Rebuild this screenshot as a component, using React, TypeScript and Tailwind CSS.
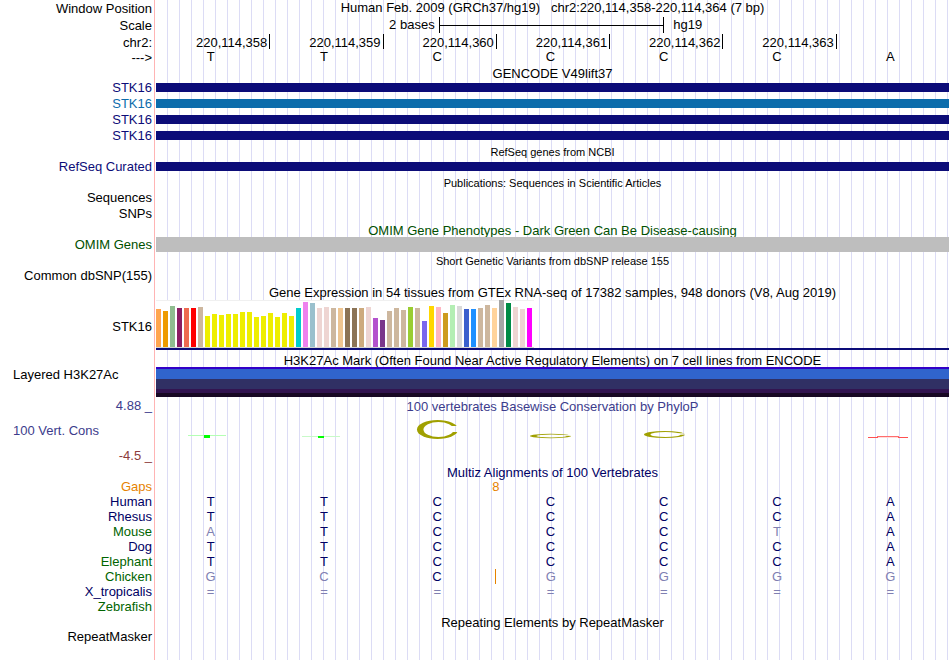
import type { ReactNode } from "react";
import clsx from "clsx";

const positions = ["220,114,358", "220,114,359", "220,114,360", "220,114,361", "220,114,362", "220,114,363", ""];
const bases = ["T", "T", "C", "C", "C", "C", "A"];

const transcripts = [
  { label: "text-[#0c0c78]", bar: "bg-[#0c0c78]" },
  { label: "text-[#0c6cac]", bar: "bg-[#0c6cac]" },
  { label: "text-[#0c0c78]", bar: "bg-[#0c0c78]" },
  { label: "text-[#0c0c78]", bar: "bg-[#0c0c78]" },
];

// [bar height in px, tissue colour]
const tissues: [number, string][] = [
  [38, "#ffa54f"], [36, "#ee9a00"], [41, "#8fbc8f"], [39, "#8b1c62"], [39, "#ee6a50"], [39, "#ff0000"],
  [40, "#cdb79e"], [31, "#eeee00"], [33, "#eeee00"], [32, "#eeee00"], [33, "#eeee00"], [33, "#eeee00"],
  [35, "#eeee00"], [35, "#eeee00"], [30, "#eeee00"], [31, "#eeee00"], [34, "#eeee00"], [30, "#eeee00"],
  [34, "#eeee00"], [31, "#eeee00"], [39, "#00cdcd"], [45, "#ee82ee"], [44, "#9ac0cd"], [39, "#eed5d2"],
  [40, "#eed5d2"], [39, "#cdb79e"], [39, "#eec591"], [39, "#8b7355"], [39, "#8b7355"], [39, "#cdaa7d"],
  [40, "#eed5d2"], [29, "#b452cd"], [27, "#7a378b"], [36, "#cdb79e"], [39, "#cdb79e"], [37, "#cdb79e"],
  [40, "#9acd32"], [39, "#cdb79e"], [26, "#7a67ee"], [41, "#ffd700"], [40, "#ffb6c1"], [34, "#cd9b1d"],
  [42, "#b4eeb4"], [41, "#d9d9d9"], [38, "#3a5fcd"], [38, "#1e90ff"], [39, "#cdb79e"], [42, "#cdb79e"],
  [39, "#ffd39b"], [47, "#a6a6a6"], [44, "#008b45"], [40, "#eed5d2"], [38, "#eed5d2"], [39, "#ff00ff"],
];

const species = [
  { name: "Human", color: "text-[#000064]", seq: "TTCCCCA" },
  { name: "Rhesus", color: "text-[#000064]", seq: "TTCCCCA" },
  { name: "Mouse", color: "text-[#006400]", seq: "ATCCCTA" },
  { name: "Dog", color: "text-[#000064]", seq: "TTCCCCA" },
  { name: "Elephant", color: "text-[#006400]", seq: "TTCCCCA" },
  { name: "Chicken", color: "text-[#006400]", seq: "GCCGGGG", insertAt: 3 },
  { name: "X_tropicalis", color: "text-[#000064]", seq: "=======" },
  { name: "Zebrafish", color: "text-[#006400]", seq: "       " },
];

type RowProps = {
  label?: string;
  labelClass?: string;
  className?: string;
  children?: ReactNode;
};

function Row({ label, labelClass, className, children }: RowProps) {
  return (
    <div className={clsx("flex", className)}>
      <div className={clsx("w-[156px] shrink-0 pr-1 text-right leading-4 whitespace-nowrap", labelClass)}>{label}</div>
      <div className="min-w-0 flex-1">{children}</div>
    </div>
  );
}

type TitleProps = {
  text: string;
  color?: string;
  small?: boolean;
  label?: string;
  labelClass?: string;
  className?: string;
};

function Title({ text, color, small, label, labelClass, className = "h-[15px]" }: TitleProps) {
  return (
    <Row className={className} label={label} labelClass={labelClass}>
      <h2 className={clsx("flex h-full items-end justify-center leading-[13px] whitespace-nowrap", small && "text-[11px]", color)}>
        {text}
      </h2>
    </Row>
  );
}

function RingMark({ id, y, ry, rim, gap }: { id: string; y: number; ry: number; rim: number; gap: number }) {
  return (
    <>
      <mask id={id}>
        <ellipse cx="21.5" cy={y} rx="20.5" ry={ry} fill="white" />
        <ellipse cx="22.5" cy={y} rx="15" ry={ry - rim} fill="black" />
        <rect x="33" y={y - gap - 0.5} width="11" height={gap * 2} fill="black" />
      </mask>
      <rect width="44" height="35" fill="#a0a000" mask={`url(#${id})`} />
    </>
  );
}

const marks: ReactNode[] = [
  <>
    <rect x="-2" y="22" width="38" height="1" fill="#b4ffb4" />
    <rect x="14" y="22" width="6" height="3" fill="#00ff00" />
  </>,
  <>
    <rect x="-1" y="23" width="38" height="1" fill="#c8fac8" />
    <rect x="15" y="23" width="6" height="2" fill="#00ff00" />
  </>,
  <RingMark id="mark-2" y={16.5} ry={9.5} rim={2} gap={3} />,
  <RingMark id="mark-3" y={23} ry={2.2} rim={0.8} gap={0.4} />,
  <RingMark id="mark-4" y={21.5} ry={3.5} rim={1} gap={0.7} />,
  null,
  <>
    <rect x="-1" y="24" width="10" height="1" fill="#ff5050" />
    <rect x="8" y="23" width="22" height="1" fill="#ff6e6e" />
    <rect x="9" y="24" width="20" height="1" fill="#ffdcdc" />
    <rect x="29" y="24" width="10" height="1" fill="#ff5050" />
  </>,
];

export default function App() {
  return (
    <main className="flex min-h-screen flex-col bg-white bg-[linear-gradient(90deg,white_154px,#ffb4b4_154px,#ffb4b4_155px,white_155px,white_156px,transparent_156px),linear-gradient(90deg,#dcdcf5_1px,transparent_1px)] [background-position:0_0,11px_0] [background-size:100%_100%,12px_100%] pr-px font-['Liberation_Sans',Arial,sans-serif] text-[13px] text-black">
      <Row className="h-[17px]" label="Window Position" labelClass="pt-px">
        <h1 className="text-center leading-4 whitespace-pre">
          {"Human Feb. 2009 (GRCh37/hg19)   chr2:220,114,358-220,114,364 (7 bp)"}
        </h1>
      </Row>

      <Row className="h-[17px]" label="Scale" labelClass="pt-px">
        <div className="flex pl-[3px] leading-4">
          <span className="flex-1 pr-1 text-right">2 bases</span>
          <span className="flex h-4 w-2/7 items-center border-x border-black">
            <span className="h-px w-full bg-black" />
          </span>
          <span className="flex-1 pl-[9px]">hg19</span>
        </div>
      </Row>

      <Row className="h-4" label="chr2:" labelClass="pt-px">
        <div className="grid grid-cols-7 leading-[18px]">
          {positions.map((pos, i) => (
            <span key={i} className={clsx("h-[15px] pr-0.5 text-right", i > 0 && "border-l border-black")}>{pos}</span>
          ))}
        </div>
      </Row>

      <Row className="h-[13px]" label="--->">
        <div className="grid grid-cols-7 leading-[13px]">
          {bases.map((base, i) => (
            <span key={i} className="pr-1 text-center">{base}</span>
          ))}
        </div>
      </Row>

      <Title text="GENCODE V49lift37" className="h-[17px]" />
      {transcripts.map((t, i) => (
        <Row key={i} className="h-4" label="STK16" labelClass={t.label}>
          <div className={clsx("mt-[3px] h-[9px]", t.bar)} />
        </Row>
      ))}

      <Title text="RefSeq genes from NCBI" small />
      <Row className="h-4" label="RefSeq Curated" labelClass="text-[#0c0c78]">
        <div className="mt-[3px] h-[9px] bg-[#0c0c78]" />
      </Row>

      <Title text="Publications: Sequences in Scientific Articles" small />
      <Row className="h-4" label="Sequences" />
      <Row className="h-4" label="SNPs" />

      <Title text="OMIM Gene Phenotypes - Dark Green Can Be Disease-causing" color="text-[#005000]" />
      <Row className="h-4" label="OMIM Genes" labelClass="text-[#005000]">
        <div className="h-[15px] bg-[#bebebe]" />
      </Row>

      <Title text="Short Genetic Variants from dbSNP release 155" small />
      <Row className="h-4" label="Common dbSNP(155)" />

      <Title text="Gene Expression in 54 tissues from GTEx RNA-seq of 17382 samples, 948 donors (V8, Aug 2019)" />
      <Row className="h-[53px] pt-px" label="STK16" labelClass="self-center pt-0.5">
        <div className="flex h-12 w-[378px] items-end gap-0.5 border-t border-b border-t-[#f0f0f0] border-b-[#d2d2d2] bg-white">
          {tissues.map(([height, color], i) => (
            <div key={i} className="w-[5px] shrink-0" style={{ height, backgroundColor: color }} />
          ))}
        </div>
        <div className="h-0.5 bg-[#0c0c78]" />
      </Row>

      <Title text="H3K27Ac Mark (Often Found Near Active Regulatory Elements) on 7 cell lines from ENCODE" />
      <Row className="h-[30px]" label="Layered H3K27Ac" labelClass="pl-[13px] !text-left">
        <div className="h-0.5 bg-[#3200c8]" />
        <div className="h-2.5 bg-[#3064cc]" />
        <div className="h-2.5 bg-[#303064]" />
        <div className="h-1 bg-[#321450]" />
        <div className="h-1 bg-[#180824]" />
      </Row>

      <Title
        text="100 vertebrates Basewise Conservation by PhyloP"
        color="text-[#3c3c8c]"
        label="4.88 _"
        labelClass="pt-px text-[#3c3c8c]"
        className="h-4"
      />
      <Row className="h-[35px]" label="100 Vert. Cons" labelClass="self-center pl-[13px] !text-left text-[#3c3c8c]">
        <div className="grid grid-cols-7">
          {marks.map((mark, i) => (
            <span key={i} className="flex justify-center pr-1">
              <svg width="46" height="35" viewBox="-2 0 46 35">{mark}</svg>
            </span>
          ))}
        </div>
      </Row>
      <Row className="h-4" label="-4.5 _" labelClass="text-[#8c3c3c]" />

      <Title text="Multiz Alignments of 100 Vertebrates" color="text-[#000064]" />
      <table className="w-full table-fixed leading-[15px]">
        <thead>
          <tr className="text-[#e68200]">
            <th scope="row" className="w-[156px] pr-1 text-right font-normal">Gaps</th>
            <td colSpan={6} className="text-center">8</td>
            <td />
          </tr>
        </thead>
        <tbody>
          {species.map((s) => (
            <tr key={s.name} className="h-[15px]">
              <th scope="row" className={clsx("pr-1 text-right font-normal", s.color)}>{s.name}</th>
              {s.seq.split("").map((base, i) => (
                <td
                  key={i}
                  className={clsx(
                    "pr-1 text-center",
                    base === bases[i] ? "text-[#000064]" : "text-[#8080b2]",
                    s.insertAt === i && "border-l border-[#e68200]"
                  )}
                >
                  {base}
                </td>
              ))}
            </tr>
          ))}
        </tbody>
      </table>

      <Title text="Repeating Elements by RepeatMasker" />
      <Row className="h-4" label="RepeatMasker" />
    </main>
  );
}
